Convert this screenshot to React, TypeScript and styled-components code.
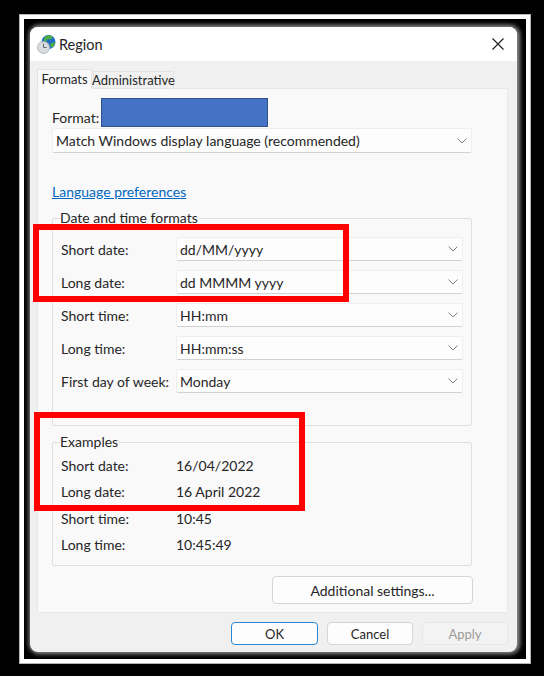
import styled, { createGlobalStyle } from 'styled-components'

const GlobalStyle = createGlobalStyle`
  html, body {
    margin: 0;
    padding: 0;
    background: #000;
  }
  * {
    box-sizing: border-box;
  }
`

const FORMAT_ROWS = [
  { label: 'Short date:', value: 'dd/MM/yyyy' },
  { label: 'Long date:', value: 'dd MMMM yyyy' },
  { label: 'Short time:', value: 'HH:mm' },
  { label: 'Long time:', value: 'HH:mm:ss' },
  { label: 'First day of week:', value: 'Monday' },
]

const EXAMPLE_ROWS = [
  { label: 'Short date:', value: '16/04/2022' },
  { label: 'Long date:', value: '16 April 2022' },
  { label: 'Short time:', value: '10:45' },
  { label: 'Long time:', value: '10:45:49' },
]

function Chevron() {
  return (
    <svg width="10" height="6" viewBox="0 0 10 6" fill="none">
      <path d="M0.5 0.5 L5 5 L9.5 0.5" stroke="#808080" strokeWidth="1" />
    </svg>
  )
}

function RegionIcon() {
  return (
    <svg width="19" height="19" viewBox="0 0 19 19">
      <circle cx="11.5" cy="7" r="7" fill="#1f6fc4" />
      <path d="M8 1.5 C10 0 13.5 0 15.5 1.5 L14 4.5 L10.5 4 L9.5 6.5 L6.5 5.5 Z" fill="#4fae3f" />
      <path d="M13.5 8.5 L18 7 C18 9.5 17 11.5 15 12.5 L13.5 11.5 Z" fill="#4fae3f" />
      <circle cx="6.5" cy="12.5" r="6" fill="#d9dcdf" stroke="#a8adb2" strokeWidth="0.8" />
      <path d="M6.5 8.8 V12.5 H9.6" fill="none" stroke="#666c72" strokeWidth="1" />
    </svg>
  )
}

export default function App() {
  return (
    <>
      <GlobalStyle />
      <Page>
        <WhiteFrame>
          <BlackFrame>
            <Dialog>
              <TitleBar>
                <RegionIcon />
                <Title>Region</Title>
                <CloseIcon width="12" height="12" viewBox="0 0 12 12">
                  <path d="M0.5 0.5 L11.5 11.5 M11.5 0.5 L0.5 11.5" stroke="#222" strokeWidth="1.2" />
                </CloseIcon>
              </TitleBar>
              <Body>
                <Tabs>
                  <Tab $active>Formats</Tab>
                  <Tab>Administrative</Tab>
                </Tabs>
                <Panel>
                  <FormatRow>
                    <span>Format:</span>
                    <Redaction />
                  </FormatRow>
                  <Select $wide>
                    <span>Match Windows display language (recommended)</span>
                    <Chevron />
                  </Select>
                  <LanguageLink>Language preferences</LanguageLink>
                  <FormatsGroup>
                    <Legend>Date and time formats</Legend>
                    {FORMAT_ROWS.map((row) => (
                      <FormRow key={row.label}>
                        <RowLabel>{row.label}</RowLabel>
                        <Select>
                          <span>{row.value}</span>
                          <Chevron />
                        </Select>
                      </FormRow>
                    ))}
                  </FormatsGroup>
                  <ExamplesGroup>
                    <Legend>Examples</Legend>
                    {EXAMPLE_ROWS.map((row) => (
                      <ExampleRow key={row.label}>
                        <RowLabel>{row.label}</RowLabel>
                        <span>{row.value}</span>
                      </ExampleRow>
                    ))}
                  </ExamplesGroup>
                  <AdditionalButton>Additional settings...</AdditionalButton>
                </Panel>
                <Footer>
                  <FooterButton $primary>OK</FooterButton>
                  <FooterButton>Cancel</FooterButton>
                  <FooterButton $disabled>Apply</FooterButton>
                </Footer>
              </Body>
            </Dialog>
          </BlackFrame>
        </WhiteFrame>
        <Highlight $left={33} $top={224} $width={316} $height={78} />
        <Highlight $left={34} $top={412} $width={271} $height={99} />
      </Page>
    </>
  )
}

const Page = styled.div`
  position: relative;
  width: 544px;
  height: 676px;
  padding: 14px 13px 12px 19px;
  background: #000;
  overflow: hidden;
  font-family: 'Lato', 'Open Sans', sans-serif;
  font-size: 14px;
  color: #262626;
`

const WhiteFrame = styled.div`
  height: 100%;
  padding: 4px;
  background: #fff;
  border: 1px solid #b4b4b4;
`

const BlackFrame = styled.div`
  height: 100%;
  padding: 8px 9px 7px 6px;
  background: #000;
`

const Dialog = styled.div`
  display: flex;
  flex-direction: column;
  height: 100%;
  border-radius: 8px;
  overflow: hidden;
  background: #f0f0f0;
  box-shadow: 1px 0 4px 2px #8f8f8f;
`

const TitleBar = styled.div`
  display: flex;
  align-items: center;
  gap: 3px;
  flex: none;
  height: 34px;
  padding: 0 13px 0 7px;
  background: #fff;
`

const Title = styled.span`
  font-size: 14.5px;
`

const CloseIcon = styled.svg`
  margin-left: auto;
`

const Body = styled.div`
  display: flex;
  flex-direction: column;
  flex: 1;
  padding: 8px 9px 7px 7px;
`

const Tabs = styled.div`
  display: flex;
  align-items: flex-end;
  flex: none;
  height: 20px;
  margin-bottom: -1px;
`

const Tab = styled.div<{ $active?: boolean }>`
  position: relative;
  z-index: ${({ $active }) => ($active ? 1 : 0)};
  display: flex;
  align-items: center;
  justify-content: center;
  width: ${({ $active }) => ($active ? '55px' : '81px')};
  height: ${({ $active }) => ($active ? '20px' : '18px')};
  margin-left: ${({ $active }) => ($active ? '0' : '1px')};
  background: ${({ $active }) => ($active ? '#f9f9f9' : '#f0f0f0')};
  border: 1px solid #e3e3e3;
  border-bottom-color: ${({ $active }) => ($active ? '#f9f9f9' : '#e3e3e3')};
  font-size: 13px;
`

const Panel = styled.div`
  display: flex;
  flex-direction: column;
  flex: none;
  height: 525px;
  padding: 9px 35px 0 14px;
  background: #f9f9f9;
  border: 1px solid #e8e8e8;
`

const FormatRow = styled.div`
  display: flex;
  align-items: center;
  flex: none;
  gap: 2px;
  height: 29px;
  margin-bottom: 1px;
  padding-top: 9px;
  overflow: visible;
`

const Redaction = styled.div`
  width: 167px;
  height: 29px;
  margin-top: -9px;
  background: #4472c4;
  border: 1px solid #2f528f;
`

const Select = styled.div<{ $wide?: boolean }>`
  display: flex;
  align-items: center;
  justify-content: space-between;
  flex: ${({ $wide }) => ($wide ? 'none' : '1')};
  height: ${({ $wide }) => ($wide ? '25px' : '24px')};
  padding: 0 4px 0 3px;
  background: #fdfdfd;
  border: 1px solid #efefef;
  border-bottom: 1px solid #d2d2d2;
  border-radius: 2px;
`

const LanguageLink = styled.a`
  flex: none;
  height: 18px;
  margin-top: 30px;
  line-height: 18px;
  color: #0067c0;
  text-decoration: underline;
`

const Group = styled.fieldset`
  flex: none;
  margin: 0;
  padding: 0 8px;
  min-width: 0;
  border: 1px solid #e0e0e0;
  border-radius: 2px;
`

const FormatsGroup = styled(Group)`
  display: flex;
  flex-direction: column;
  gap: 9px;
  margin-top: 8px;
  padding-top: 10px;
  padding-bottom: 32px;
`

const ExamplesGroup = styled(Group)`
  margin-top: 7px;
  padding-top: 1px;
  padding-bottom: 7px;
`

const Legend = styled.legend`
  height: 18px;
  margin-left: -1px;
  padding: 0;
  line-height: 18px;
`

const FormRow = styled.div`
  display: flex;
  align-items: center;
  height: 24px;
`

const RowLabel = styled.span`
  flex: none;
  width: 115px;
  white-space: nowrap;
`

const ExampleRow = styled.div`
  display: flex;
  align-items: center;
  height: 26.5px;
`

const AdditionalButton = styled.div`
  display: flex;
  align-items: center;
  justify-content: center;
  flex: none;
  width: 201px;
  height: 28px;
  margin: 10px -1px 0 auto;
  background: #fdfdfd;
  border: 1px solid #d5d5d5;
  border-radius: 4px;
`

const Footer = styled.div`
  display: flex;
  justify-content: flex-end;
  gap: 9px;
  flex: none;
  margin-top: 9px;
`

const FooterButton = styled.div<{ $primary?: boolean; $disabled?: boolean }>`
  display: flex;
  align-items: center;
  justify-content: center;
  width: ${({ $primary }) => ($primary ? '87px' : '86px')};
  height: 23px;
  background: ${({ $disabled }) => ($disabled ? '#f3f3f3' : '#fdfdfd')};
  border: 1px solid ${({ $primary, $disabled }) => ($primary ? '#2b86d3' : $disabled ? '#e8e8e8' : '#d5d5d5')};
  border-radius: 4px;
  color: ${({ $disabled }) => ($disabled ? '#9b9b9b' : '#262626')};
  font-size: 13px;
`

const Highlight = styled.div<{ $left: number; $top: number; $width: number; $height: number }>`
  position: absolute;
  left: ${({ $left }) => $left}px;
  top: ${({ $top }) => $top}px;
  width: ${({ $width }) => $width}px;
  height: ${({ $height }) => $height}px;
  border: 6px solid #ff0000;
`
